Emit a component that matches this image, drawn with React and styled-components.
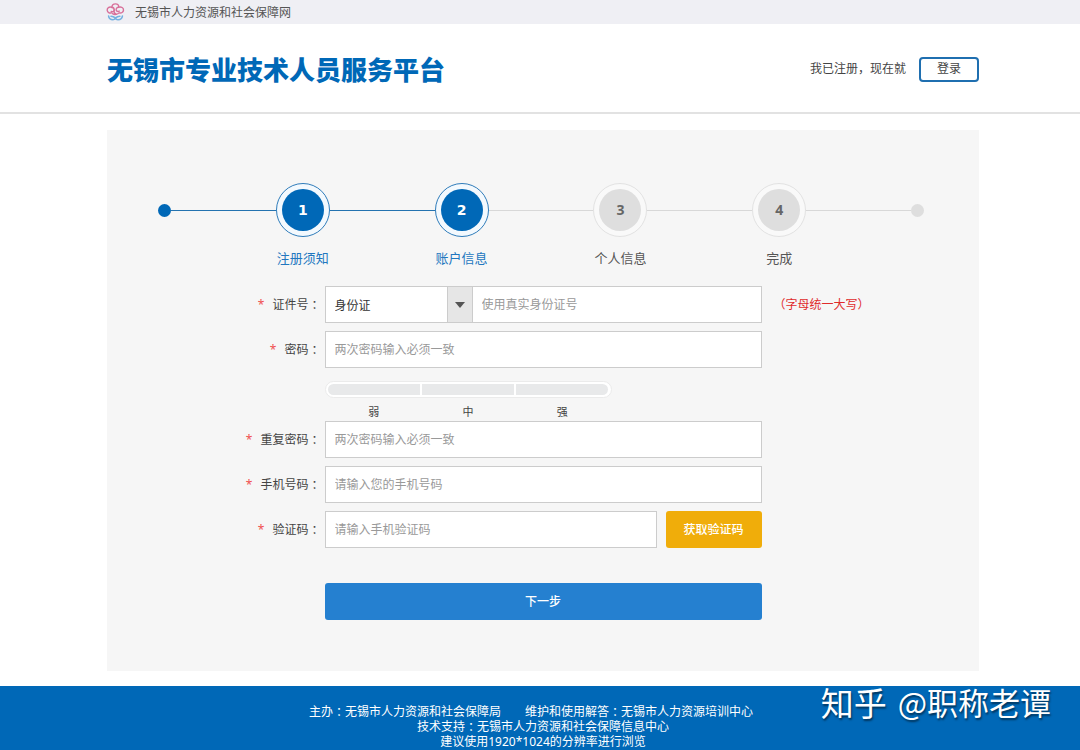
import React from "react";
import styled, { createGlobalStyle } from "styled-components";

const sans = '"Noto Sans", "Noto Sans CJK SC", sans-serif';

const GlobalStyle = createGlobalStyle`
  *, *::before, *::after { box-sizing: border-box; }
  html, body, #root { height: 100%; }
  body {
    margin: 0;
    background: #fff;
    color: #444;
    font: 12px/16px ${sans};
  }
  button, input, select { font: inherit; color: inherit; margin: 0; }
`;

const Page = styled.div`
  display: flex;
  flex-direction: column;
  min-height: 100%;
`;

const TopBar = styled.div`
  display: flex;
  align-items: center;
  gap: 10px;
  height: 24px;
  padding: 0 101px 0 106px;
  background: #efeff4;
  color: #555;
`;

const SiteName = styled.span`
  padding-top: 2px;
`;

const Header = styled.header`
  display: flex;
  align-items: center;
  justify-content: space-between;
  height: 90px;
  padding: 2px 101px 0 107px;
  border-bottom: 2px solid #e2e2e2;
`;

const Title = styled.h1`
  margin: 0;
  font: 900 26px/34px "Noto Sans CJK SC", sans-serif;
  color: #0068b7;
  white-space: nowrap;
`;

const LoginArea = styled.div`
  display: flex;
  align-items: center;
  gap: 13px;
  white-space: nowrap;
`;

const LoginButton = styled.button`
  width: 60px;
  height: 25px;
  padding: 0;
  border: 2px solid #1f6fb0;
  border-radius: 4px;
  background: #fff;
  line-height: 20px;
`;

const Panel = styled.main`
  margin: 16px 101px 15px 107px;
  padding: 53px 0 51px;
  background: #f6f6f6;
`;

const Steps = styled.ol`
  display: flex;
  align-items: flex-start;
  margin: 0 55px 19px 51px;
  padding: 0;
  list-style: none;
`;

const EndDot = styled.li`
  flex: none;
  width: 13px;
  height: 13px;
  margin-top: 21px;
  border-radius: 50%;
  background: ${(p) => (p.$done ? "#0068b7" : "#dedede")};
`;

const Line = styled.li`
  flex: 1;
  height: 1px;
  margin-top: 27px;
  background: ${(p) => (p.$done ? "#2473b0" : "#d8d8d8")};
`;

const Step = styled.li`
  display: flex;
  flex: none;
  flex-direction: column;
  align-items: center;
  width: 54px;
  color: ${(p) => (p.$done ? "#2277bf" : "#555")};
`;

const Circle = styled.span`
  width: 54px;
  height: 54px;
  padding: 5px;
  border: 1px solid ${(p) => (p.$done ? "#2f7cba" : "#e2e2e2")};
  border-radius: 50%;
  background: ${(p) => (p.$done ? "#f3f9fe" : "#f9f9f9")};
`;

const Number = styled.span`
  display: block;
  height: 42px;
  border-radius: 50%;
  background: ${(p) => (p.$done ? "#0068b7" : "#dedede")};
  color: ${(p) => (p.$done ? "#fff" : "#666")};
  font: bold 14px/42px ${(p) => (p.$done ? '"DejaVu Sans"' : '"Noto Sans"')}, sans-serif;
  text-align: center;
`;

const StepLabel = styled.span`
  margin-top: 12px;
  font-size: 13px;
  line-height: 18px;
  white-space: nowrap;
`;

const Row = styled.div`
  display: grid;
  grid-template-columns: 1fr 437px 1fr;
  align-items: center;
  margin-bottom: ${(p) => p.$after ?? 8}px;
`;

const Label = styled.label`
  display: flex;
  justify-content: flex-end;
  gap: 8px;
  padding-right: 4px;
  white-space: nowrap;
`;

const Star = styled.span`
  color: #f05050;
`;

const ColonMark = styled.span`
  display: inline-block;
  font-family: "Noto Sans CJK JP", sans-serif;
  vertical-align: bottom;
`;

const Field = styled.div`
  display: flex;
  grid-column: 2;
  gap: ${(p) => p.$gap ?? 0}px;
`;

const TextInput = styled.input`
  flex: 1;
  min-width: 0;
  height: 37px;
  padding: 0 9px;
  border: 1px solid #ccc;
  border-left-width: ${(p) => (p.$joined ? 0 : 1)}px;
  border-radius: 0;
  outline: none;
  background: #fff;
  &::placeholder { color: #999; opacity: 1; }
`;

const SelectBox = styled.div`
  position: relative;
  flex: none;
  width: 148px;
`;

const Select = styled.select`
  width: 100%;
  height: 37px;
  padding: 2px 30px 0 9px;
  border: 1px solid #ccc;
  border-radius: 0;
  outline: none;
  appearance: none;
  background: #fff;
  color: #333;
`;

const Arrow = styled.span`
  position: absolute;
  top: 1px;
  right: 1px;
  bottom: 1px;
  display: flex;
  align-items: center;
  justify-content: center;
  width: 25px;
  border-left: 1px solid #ccc;
  background: #e6e6e6;
  pointer-events: none;
`;

const Hint = styled.span`
  padding-left: 12px;
  color: #e02b2b;
  white-space: nowrap;
`;

const Strength = styled.div`
  grid-column: 2;
  width: 287px;
  padding-top: 5px;
`;

const Meter = styled.div`
  display: flex;
  gap: 2px;
  height: 17px;
  padding: 2px;
  border: 1px solid #ebebeb;
  border-radius: 9px;
  background: #fff;
`;

const Segment = styled.span`
  flex: 1;
  background: #e8e9ea;
  &:first-child { border-radius: 6px 0 0 6px; }
  &:last-child { border-radius: 0 6px 6px 0; }
`;

const Levels = styled.div`
  display: flex;
  padding: 6px 2px 0;
  font-size: 11px;
`;

const Level = styled.span`
  flex: 1;
  text-align: center;
`;

const CodeButton = styled.button`
  flex: none;
  width: 96px;
  height: 37px;
  padding: 0;
  border: 0;
  border-radius: 3px;
  background: #f0ad0a;
  color: #fff;
  font-weight: 500;
`;

const NextButton = styled.button`
  flex: 1;
  height: 37px;
  margin-top: 27px;
  padding: 0;
  border: 0;
  border-radius: 3px;
  background: #2580d0;
  color: #fff;
  font-weight: 500;
`;

const Footer = styled.footer`
  position: relative;
  flex: 1;
  padding: 18px 101px 1px 107px;
  background: #0068b7;
  color: #fff;
  line-height: 15px;
  text-align: center;
`;

const FooterLine = styled.p`
  display: flex;
  justify-content: center;
  gap: 24px;
  margin: 0;
  padding-right: ${(p) => (p.$shifted ? 24 : 0)}px;
`;

const Watermark = styled.div`
  position: absolute;
  top: -6px;
  right: 29px;
  display: flex;
  align-items: center;
  gap: 11px;
  font: 31px/44px "Noto Sans CJK SC", sans-serif;
  text-shadow: 1px 2px 2px rgba(0, 0, 0, 0.5);
  white-space: nowrap;
`;

const Brand = styled.span`
  font-size: 33px;
`;

const Colon = () => <ColonMark>：</ColonMark>;

const Logo = () => (
  <svg width="19" height="18" viewBox="0 0 19 18" fill="none" strokeLinecap="round" aria-hidden="true">
    <g stroke="#d8709a" strokeWidth="1.4">
      <path d="M6 4.6C5.600 2 7.400 .9 9.400 .9c2.200 0 3.700 1.300 3.300 3.400" />
      <path d="M5.800 4.300C3 3.400 1 5 1.200 7.200c.2 2.200 2.300 3.300 4.300 2.600" />
      <path d="M12.700 4.200c2.600-.8 4.900.6 4.800 2.900-.1 2.200-2.200 3.300-4.300 2.700" />
      <path d="M5.800 4.300c1.600.2 2.500 1.300 2.400 2.800C8.100 8.600 6.800 9.300 5.200 8.400" />
      <path d="M12.700 4.300c-1.900 0-2.800 1.300-2.500 2.700.3 1.500 1.800 1.900 3 1.100" />
      <path d="M8.200 7c-.6 2 .4 3.700 2.200 4.200M6.500 10.700c1.400.8 4.100.8 5.800-.2" />
    </g>
    <g stroke="#74b0e0" strokeWidth="1.600">
      <path d="M2.600 13c.3 2.500 1.800 3.700 4.400 3.700 1.300 0 2.200-.6 2.400-1.500" />
      <path d="M16.400 13c-.3 2.500-1.800 3.700-4.400 3.700-1.400 0-2.300-.6-2.600-1.500" />
      <path d="M5 13.300c1.700.1 3 .6 4.400 1.700 1.400-1.100 2.700-1.600 4.500-1.700" />
    </g>
  </svg>
);

const steps = [
  { label: "注册须知", done: true, nextDone: true },
  { label: "账户信息", done: true, nextDone: false },
  { label: "个人信息", done: false, nextDone: false },
  { label: "完成", done: false, nextDone: false },
];

const FieldLabel = ({ id, children }) => (
  <Label htmlFor={id}>
    <Star>*</Star>
    <span>{children}<Colon /></span>
  </Label>
);

export default function App() {
  return (
    <Page>
      <GlobalStyle />
      <TopBar>
        <Logo />
        <SiteName>无锡市人力资源和社会保障网</SiteName>
      </TopBar>
      <Header>
        <Title>无锡市专业技术人员服务平台</Title>
        <LoginArea>
          <span>我已注册，现在就</span>
          <LoginButton type="button">登录</LoginButton>
        </LoginArea>
      </Header>

      <Panel>
        <Steps>
          <EndDot $done />
          <Line $done />
          {steps.map((s, i) => (
            <React.Fragment key={s.label}>
              <Step $done={s.done}>
                <Circle $done={s.done}>
                  <Number $done={s.done}>{i + 1}</Number>
                </Circle>
                <StepLabel>{s.label}</StepLabel>
              </Step>
              <Line $done={s.nextDone} />
            </React.Fragment>
          ))}
          <EndDot />
        </Steps>

        <form onSubmit={(e) => e.preventDefault()}>
          <Row>
            <FieldLabel id="idNumber">证件号</FieldLabel>
            <Field>
              <SelectBox>
                <Select aria-label="证件类型" defaultValue="id">
                  <option value="id">身份证</option>
                </Select>
                <Arrow>
                  <svg width="10" height="6" viewBox="0 0 10 6" aria-hidden="true">
                    <path d="M0 0h10L5 6z" fill="#555" />
                  </svg>
                </Arrow>
              </SelectBox>
              <TextInput id="idNumber" $joined placeholder="使用真实身份证号" />
            </Field>
            <Hint>（字母统一大写）</Hint>
          </Row>
          <Row>
            <FieldLabel id="password">密码</FieldLabel>
            <Field>
              <TextInput id="password" type="password" placeholder="两次密码输入必须一致" />
            </Field>
          </Row>
          <Row $after={1}>
            <Strength>
              <Meter>
                <Segment />
                <Segment />
                <Segment />
              </Meter>
              <Levels>
                <Level>弱</Level>
                <Level>中</Level>
                <Level>强</Level>
              </Levels>
            </Strength>
          </Row>
          <Row>
            <FieldLabel id="repeat">重复密码</FieldLabel>
            <Field>
              <TextInput id="repeat" type="password" placeholder="两次密码输入必须一致" />
            </Field>
          </Row>
          <Row>
            <FieldLabel id="phone">手机号码</FieldLabel>
            <Field>
              <TextInput id="phone" type="tel" placeholder="请输入您的手机号码" />
            </Field>
          </Row>
          <Row>
            <FieldLabel id="code">验证码</FieldLabel>
            <Field $gap={9}>
              <TextInput id="code" placeholder="请输入手机验证码" />
              <CodeButton type="button">获取验证码</CodeButton>
            </Field>
          </Row>
          <Row $after={0}>
            <Field>
              <NextButton type="submit">下一步</NextButton>
            </Field>
          </Row>
        </form>
      </Panel>

      <Footer>
        <FooterLine $shifted>
          <span>主办<Colon />无锡市人力资源和社会保障局</span>
          <span>维护和使用解答<Colon />无锡市人力资源培训中心</span>
        </FooterLine>
        <FooterLine>
          <span>技术支持<Colon />无锡市人力资源和社会保障信息中心</span>
        </FooterLine>
        <FooterLine>建议使用1920*1024的分辨率进行浏览</FooterLine>
        <Watermark>
          <Brand>知乎</Brand>
          <span>@职称老谭</span>
        </Watermark>
      </Footer>
    </Page>
  );
}
